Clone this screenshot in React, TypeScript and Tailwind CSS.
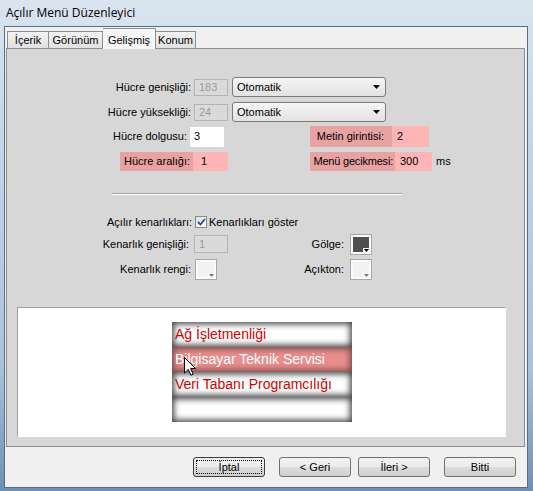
import React from 'react';

const Arrow = ({ className = '' }: { className?: string }) => (
  <svg width="7" height="4" viewBox="0 0 7 4" className={className}>
    <path d="M0 0h7L3.5 4z" fill="#000" />
  </svg>
);

function Select() {
  return (
    <div className="ml-[4px] w-[154px] h-[20px] rounded-[3px] border border-[#7a7a7a] bg-gradient-to-b from-[#f6f6f6] to-[#e2e2e2] flex items-center justify-between pl-[4px] pr-[5px]">
      <span className="text-[11px] text-black">Otomatik</span>
      <Arrow />
    </div>
  );
}

function Swatch({ fill, dark }: { fill: string; dark?: boolean }) {
  return (
    <div className="relative w-[22px] h-[21px] border border-[#a8a8a8] bg-[#fbfbfb] p-[2px]">
      <div className={`w-full h-full ${fill}`} />
      <div className="absolute right-[1px] bottom-[1px] w-[7px] h-[5px] bg-[#fbfbfb] flex items-center justify-center">
        <svg width="5" height="3" viewBox="0 0 5 3">
          <path d="M0 0h5L2.5 3z" fill={dark ? '#000' : '#777'} />
        </svg>
      </div>
    </div>
  );
}

function Btn({ label, focus }: { label: string; focus?: boolean }) {
  return (
    <div
      className={`w-[72px] h-[20px] rounded-[3px] border ${focus ? 'border-[#3c3c3c]' : 'border-[#707070]'} bg-[linear-gradient(#f2f2f2_0%,#ebebeb_50%,#dddddd_50%,#cfcfcf_100%)] flex items-center justify-center p-[2px]`}
    >
      <div className={`w-full h-full flex items-center justify-center text-[11px] text-black ${focus ? 'border border-dotted border-black' : ''}`}>
        {label}
      </div>
    </div>
  );
}

const menuItems = ['Ağ İşletmenliği', 'Bilgisayar Teknik Servisi', 'Veri Tabanı Programcılığı', ''];

export default function App() {
  return (
    <div className="w-[533px] h-[491px] overflow-hidden flex flex-col bg-[linear-gradient(180deg,#d9e4ef_0%,#c3d5e8_30%,#a9c2dc_75%,#6d90b6_100%)] font-['Liberation_Sans',Arial,sans-serif] text-black whitespace-nowrap">
      {/* başlık */}
      <div className="h-[26px] pl-[6px] flex items-center font-['Open_Sans',sans-serif] text-[12px] text-black">
        Açılır Menü Düzenleyici
      </div>

      <div className="ml-[4px] w-[524px] h-[462px] border border-[#5d6d80] bg-[#f0f0f0] flex flex-col">
        {/* sekmeler */}
        <div className="h-[21px] flex items-end pl-[2px] text-[11px]">
          <div className="w-[42px] h-[17px] border border-b-0 border-[#8c8e94] bg-gradient-to-b from-[#f3f3f3] to-[#e1e1e1] flex items-center justify-center">İçerik</div>
          <div className="w-[54px] h-[17px] border border-b-0 border-l-0 border-[#8c8e94] bg-gradient-to-b from-[#f3f3f3] to-[#e1e1e1] flex items-center justify-center">Görünüm</div>
          <div className="w-[53px] h-[21px] -mb-[1px] border border-b-0 border-l-0 border-[#8c8e94] bg-[#f7f7f7] flex items-start pt-[3px] justify-center relative z-10">Gelişmiş</div>
          <div className="w-[40px] h-[17px] border border-b-0 border-l-0 border-[#8c8e94] bg-gradient-to-b from-[#f3f3f3] to-[#e1e1e1] flex items-center justify-center">Konum</div>
        </div>

        {/* panel */}
        <div className="ml-[1px] w-[519px] h-[399px] border border-[#8c8e94] bg-[#d7d7d7] flex flex-col text-[11px]">
          <div className="mt-[28px] h-[20px] flex items-center">
            <div className="w-[184px] text-right">Hücre genişliği:</div>
            <div className="ml-[3px] w-[34px] h-[17px] border border-[#b4b4b4] bg-[#dadada] text-[#9a9a9a] pl-[4px] flex items-center">183</div>
            <Select />
          </div>
          <div className="mt-[5px] h-[20px] flex items-center">
            <div className="w-[184px] text-right">Hücre yüksekliği:</div>
            <div className="ml-[3px] w-[34px] h-[17px] border border-[#b4b4b4] bg-[#dadada] text-[#9a9a9a] pl-[4px] flex items-center">24</div>
            <Select />
          </div>
          <div className="mt-[4px] h-[21px] flex items-center">
            <div className="w-[183px] text-right pr-[3px]">Hücre dolgusu:</div>
            <div className="w-[34px] h-[20px] bg-white pl-[4px] flex items-center">3</div>
            <div className="ml-[86px] w-[82px] h-[21px] bg-[#e9a2a2] pr-[8px] flex items-center justify-end">Metin girintisi:</div>
            <div className="w-[37px] h-[21px] bg-[#ffb5b5] pl-[5px] flex items-center">2</div>
          </div>
          <div className="mt-[5px] h-[19px] flex items-center">
            <div className="ml-[113px] w-[73px] h-[19px] bg-[#e9a2a2] pr-[3px] flex items-center justify-end">Hücre aralığı:</div>
            <div className="w-[35px] h-[19px] bg-[#ffb5b5] pl-[8px] flex items-center">1</div>
            <div className="ml-[82px] w-[85px] h-[19px] bg-[#e9a2a2] pr-[2px] flex items-center justify-end overflow-hidden">
              <span className="tracking-[-0.2px]">Menü gecikmesi:</span>
            </div>
            <div className="w-[37px] h-[19px] bg-[#ffb5b5] pl-[5px] flex items-center">300</div>
            <span className="ml-[4px]">ms</span>
          </div>

          <div className="mt-[22px] ml-[105px] w-[290px] h-[2px] border-t border-[#a3a3a3] border-b border-b-white" />

          <div className="mt-[19px] h-[16px] flex items-center">
            <div className="w-[185px] text-right">Açılır kenarlıkları:</div>
            <div className="ml-[3px] w-[12px] h-[12px] border border-[#8a8a8a] bg-gradient-to-br from-[#dedede] to-white flex items-center justify-center">
              <svg width="9" height="8" viewBox="0 0 9 8">
                <path d="M1 4l2.5 2.5L8 1" stroke="#2c4a8a" strokeWidth="1.8" fill="none" />
              </svg>
            </div>
            <span className="ml-[2px]">Kenarlıkları göster</span>
          </div>

          <div className="mt-[3px] h-[22px] flex items-center">
            <div className="w-[182px] text-right">Kenarlık genişliği:</div>
            <div className="ml-[5px] w-[34px] h-[18px] border border-[#b4b4b4] bg-[#dadada] text-[#9a9a9a] pl-[4px] flex items-center">1</div>
            <div className="w-[116px] text-right">Gölge:</div>
            <div className="ml-[6px]">
              <Swatch fill="bg-[#505050]" dark />
            </div>
          </div>

          <div className="mt-[3px] h-[22px] flex items-center">
            <div className="w-[184px] text-right">Kenarlık rengi:</div>
            <div className="ml-[4px]">
              <Swatch fill="bg-[#f2f2f2]" />
            </div>
            <div className="w-[127px] text-right">Açıkton:</div>
            <div className="ml-[6px]">
              <Swatch fill="bg-[#f2f2f2]" />
            </div>
          </div>

          {/* önizleme */}
          <div className="mt-[27px] ml-[10px] w-[489px] h-[130px] border border-[#a0a0a0] border-r-white border-b-white bg-white">
            <div className="relative mt-[14px] ml-[154px] w-[180px] flex flex-col text-[14px]">
              {menuItems.map((item, i) => (
                <div
                  key={i}
                  className={`h-[25px] pl-[3px] flex items-center ${
                    i === 1
                      ? 'bg-[#e98d8d] text-white shadow-[inset_0_0_6px_2px_#6e4848]'
                      : 'bg-white text-[#d20000] shadow-[inset_0_0_6px_2px_#3f3f3f]'
                  }`}
                >
                  {item}
                </div>
              ))}
              <svg width="12" height="19" viewBox="0 0 12 19" className="absolute left-[12px] top-[35px]">
                <path d="M0.5 0.5V16l3.8-3.6 2.6 5.8 2.3-1-2.6-5.7h5z" fill="#fff" stroke="#000" strokeWidth="1" />
              </svg>
            </div>
          </div>
        </div>

        {/* butonlar */}
        <div className="mt-[10px] flex items-center">
          <div className="ml-[188px]">
            <Btn label="İptal" focus />
          </div>
          <div className="ml-[14px]">
            <Btn label="< Geri" />
          </div>
          <div className="ml-[7px]">
            <Btn label="İleri >" />
          </div>
          <div className="ml-[14px]">
            <Btn label="Bitti" />
          </div>
        </div>
      </div>
    </div>
  );
}
